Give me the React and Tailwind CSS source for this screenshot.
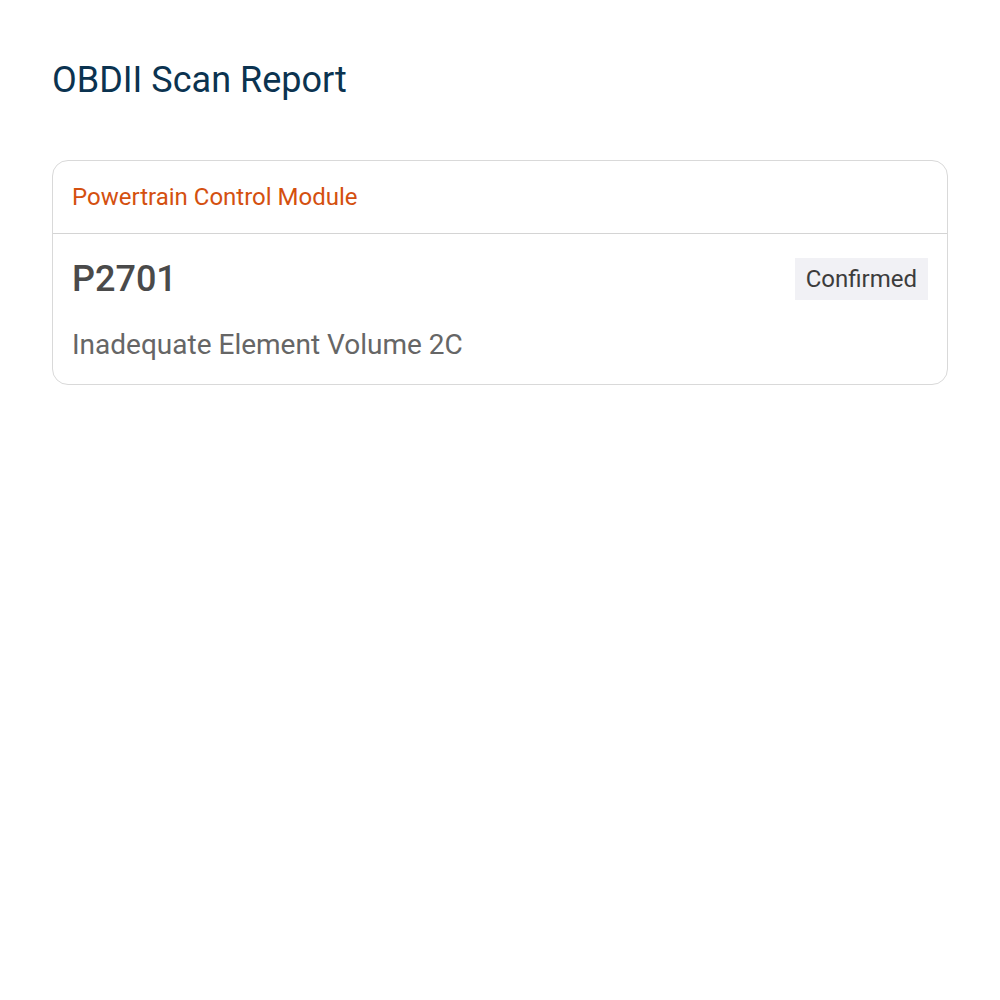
export default function App() {
  return (
    <div className="min-h-[1000px] bg-white px-[52px] pt-[55px]" style={{ fontFamily: "Roboto, 'Liberation Sans', sans-serif" }}>
      <h1 className="text-[36px] leading-[50px] text-[#0b3350] font-normal">OBDII Scan Report</h1>
      <div className="mt-[55px] rounded-[16px] border border-[#d9d9d9] overflow-hidden">
        <div className="h-[73px] flex items-center px-[19px] border-b border-[#d4d4d4]">
          <span className="text-[24px] text-[#d4500f]">Powertrain Control Module</span>
        </div>
        <div className="px-[19px] pt-[24px] pb-[21px]">
          <div className="flex items-center justify-between">
            <span className="text-[36px] leading-[42px] font-medium text-[#4a4a4a]">P2701</span>
            <span className="bg-[#f1f1f5] px-[11px] h-[42px] flex items-center text-[24px] text-[#3c3c3c]">Confirmed</span>
          </div>
          <div className="mt-[27px] text-[28px] leading-[36px] text-[#666666]">Inadequate Element Volume 2C</div>
        </div>
      </div>
    </div>
  );
}
